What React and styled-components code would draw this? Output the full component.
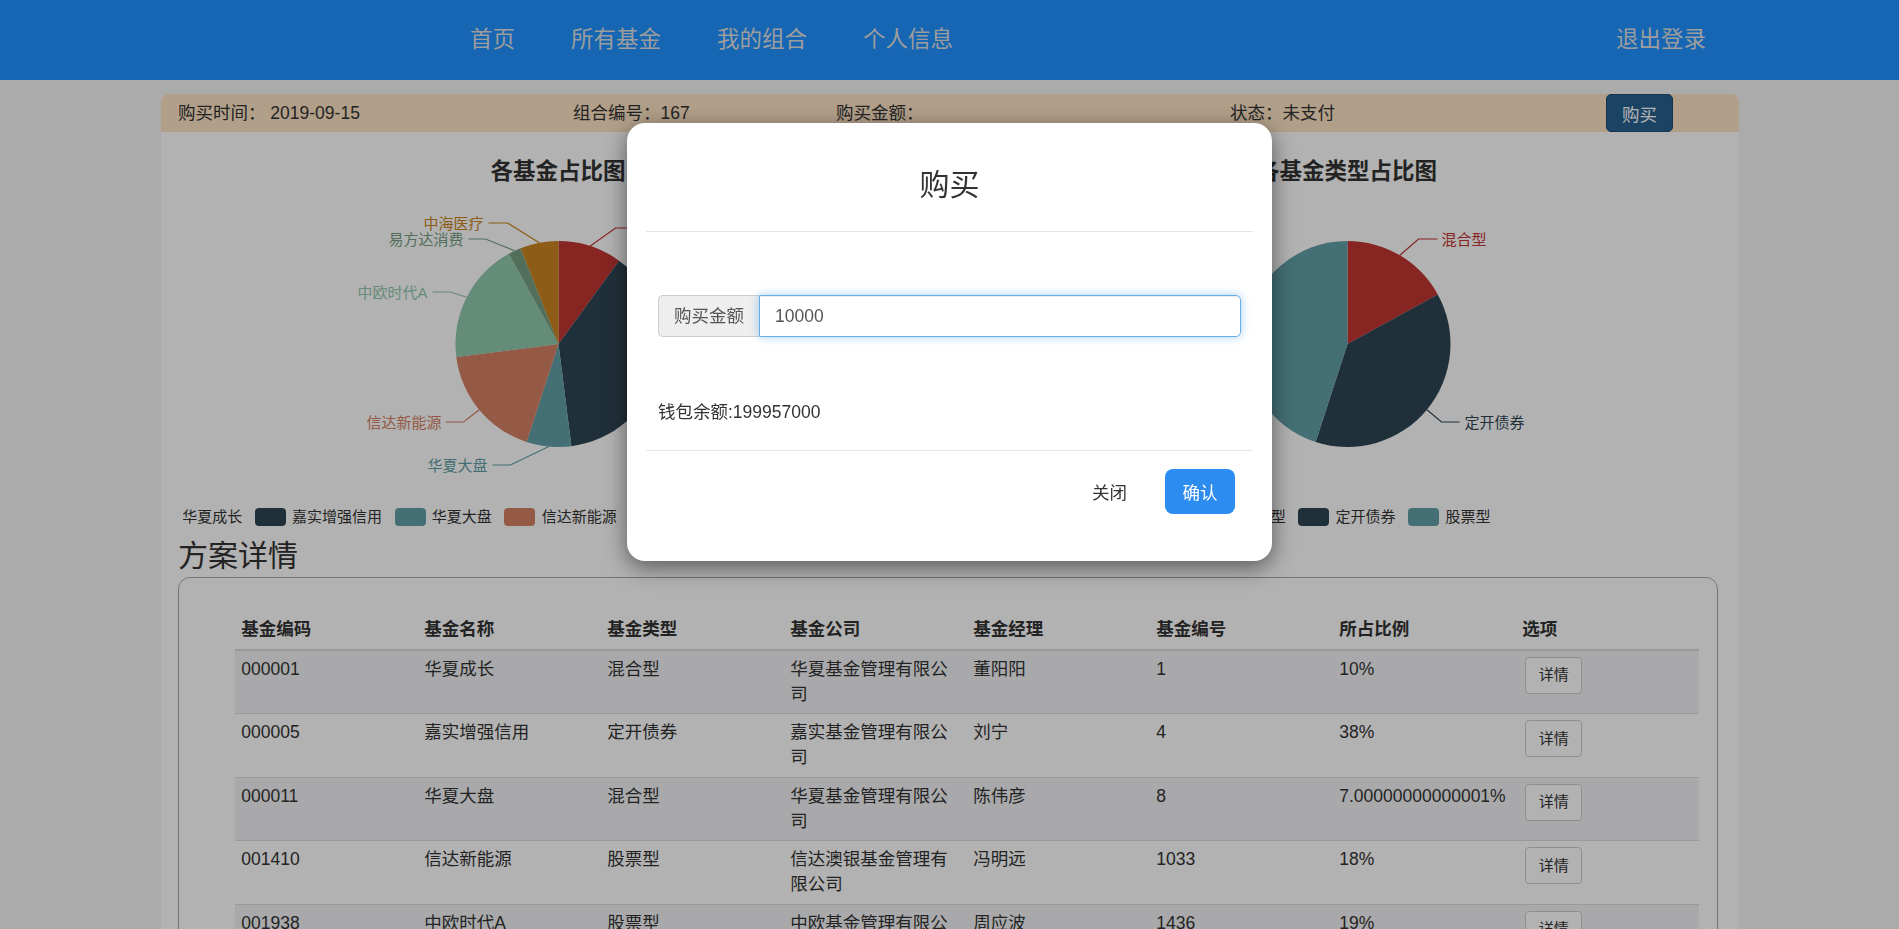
import React, { useEffect, useRef } from 'react'
import styled, { createGlobalStyle } from 'styled-components'

const GlobalStyle = createGlobalStyle`
  * { box-sizing: border-box; }
  html, body {
    margin: 0;
    padding: 0;
    overflow: hidden;
  }
  body {
    background: #f5f5f5;
    font-family: "Liberation Sans", "Noto Sans CJK SC", sans-serif;
    font-size: 17.5px;
    line-height: 25px;
    color: #333;
  }
`;

// data
const fundShare = [
  { name: '华夏成长', value: 10, color: '#c23531', line: [[31.8, -98], [57, -116], [76, -116]], text: [81, -116], anchor: 'start' },
  { name: '嘉实增强信用', value: 38, color: '#2f4554', line: [[99.8, 25.6], [118, 30], [137, 30]], text: [142, 30], anchor: 'start' },
  { name: '华夏大盘', value: 7, color: '#61a0a8', line: [[-9.7, 102.5], [-48, 121], [-66, 121]], text: [-71, 121], anchor: 'end' },
  { name: '信达新能源', value: 18, color: '#d48265', line: [[-79.3, 65.7], [-95, 78], [-113, 78]], text: [-117, 78], anchor: 'end' },
  { name: '中欧时代A', value: 19, color: '#91c7ae', line: [[-91.8, -46.8], [-108, -52], [-126, -52]], text: [-131, -52], anchor: 'end' },
  { name: '易方达消费', value: 2, color: '#749f83', line: [[-43.9, -93.2], [-73, -105], [-90, -105]], text: [-95, -105], anchor: 'end' },
  { name: '中海医疗', value: 6, color: '#ca8622', line: [[-19.3, -101.2], [-51, -121], [-70, -121]], text: [-75, -121], anchor: 'end' },
];

const typeShare = [
  { name: '混合型', value: 17, color: '#c23531', line: [[52.4, -88.7], [71, -105], [90, -105]], text: [94, -105], anchor: 'start' },
  { name: '定开债券', value: 38, color: '#2f4554', line: [[79.4, 65.7], [94, 78], [112, 78]], text: [117, 78], anchor: 'start' },
  { name: '股票型', value: 45, color: '#61a0a8', line: [[-101.7, -16.1], [-120.5, -19], [-139, -19]], text: [-144, -19], anchor: 'end' },
];

const funds = [
  ['000001', '华夏成长', '混合型', '华夏基金管理有限公司', '董阳阳', '1', '10%'],
  ['000005', '嘉实增强信用', '定开债券', '嘉实基金管理有限公司', '刘宁', '4', '38%'],
  ['000011', '华夏大盘', '混合型', '华夏基金管理有限公司', '陈伟彦', '8', '7.00000000000001%'],
  ['001410', '信达新能源', '股票型', '信达澳银基金管理有限公司', '冯明远', '1033', '18%'],
  ['001938', '中欧时代A', '股票型', '中欧基金管理有限公司', '周应波', '1436', '19%'],
  ['110022', '易方达消费', '股票型', '易方达基金管理有限公司', '萧楠', '2170', '2%'],
  ['398031', '中海医疗', '股票型', '中海基金管理有限公司', '左飞', '2511', '6%'],
];

//css section
const Navbar = styled.nav`
  position: relative;
  z-index: 1070;
  height: 80px;
  background: #1766b3;
  display: flex;
  align-items: center;
  padding: 0 165px 0 442px;
`;

const NavLink = styled.a`
  padding: 0 28px;
  font-size: 22.5px;
  line-height: 30px;
  color: #9d9d9d;
  text-decoration: none;
  white-space: nowrap;
  ${p => p.$right && 'margin-left: auto;'}
`;

const Container = styled.div`
  width: 1578px;
  margin: 14px auto 0;
  background: #fff;
  border-radius: 8px 8px 0 0;
  padding-bottom: 40px;
`;

const InfoBar = styled.div`
  height: 38px;
  background: bisque;
  border-radius: 8px 8px 0 0;
  display: grid;
  grid-template-columns: 395px 263px 394px 376px 1fr;
  align-items: center;
  padding-left: 17.5px;
  white-space: nowrap;
`;

const BuyButton = styled.button`
  justify-self: start;
  height: 38px;
  padding: 0 15px;
  background: #286090;
  border: 1px solid #204d74;
  border-radius: 5px;
  color: #fff;
  font-family: inherit;
  font-size: 17.5px;
`;

const ChartsRow = styled.div`
  display: flex;
`;

const ChartCol = styled.div`
  width: 50%;
  padding: 25px 16px 0 22px;
`;

const ChartTitle = styled.div`
  text-align: center;
  font-size: 22.5px;
  line-height: 30px;
  font-weight: bold;
  color: #333;
`;

const Legend = styled.div`
  margin-top: 7px;
  height: 17.5px;
  display: flex;
  justify-content: center;
  gap: 12.5px;
  overflow: hidden;
`;

const LegendItem = styled.div`
  flex-shrink: 0;
  display: flex;
  align-items: center;
  gap: 6.25px;
  font-size: 15px;
  line-height: 17.5px;
  white-space: nowrap;
  color: #333;
`;

const Swatch = styled.span`
  width: 31px;
  height: 17.5px;
  border-radius: 4px;
  background: ${p => p.$color};
`;

const SectionTitle = styled.h3`
  margin: 13px 0 0 17.5px;
  font-size: 30px;
  line-height: 33px;
  font-weight: 400;
`;

const Panel = styled.div`
  margin: 5.5px 0 0 17.5px;
  width: 1540px;
  border: 1px solid #aaa;
  border-radius: 12px;
  padding: 33px 18px 20px 56px;
`;

const Table = styled.table`
  width: 100%;
  table-layout: fixed;
  border-collapse: collapse;

  th {
    padding: 6.25px;
    text-align: left;
    vertical-align: bottom;
    border-bottom: 2.5px solid #ddd;
    font-weight: bold;
    line-height: 25px;
  }
  td {
    padding: 6.25px;
    vertical-align: top;
    border-top: 1px solid #ddd;
    line-height: 25px;
    white-space: normal;
  }
  tbody tr:nth-of-type(odd) {
    background: #f2f3f5;
  }
`;

const DetailButton = styled.button`
  margin-left: 3px;
  padding: 6.25px 12.5px;
  font-family: inherit;
  font-size: 15px;
  line-height: 22.5px;
  border: 1px solid #ccc;
  border-radius: 3.75px;
  background: #fff;
  color: #333;
`;

const Backdrop = styled.div`
  position: fixed;
  inset: 0;
  background: rgba(0, 0, 0, 0.3);
  z-index: 1040;
`;

const Modal = styled.div`
  position: fixed;
  top: 123px;
  left: 50%;
  margin-left: -322.5px;
  width: 645px;
  padding: 0 19px;
  background: #fff;
  border-radius: 18px;
  box-shadow: 0 6px 22px rgba(0, 0, 0, 0.5);
  z-index: 1050;
`;

const ModalHeader = styled.div`
  padding: 44.5px 0 30.5px;
  text-align: center;
  border-bottom: 1px solid #e5e5e5;

  h4 {
    margin: 0;
    font-size: 30px;
    line-height: 33px;
    font-weight: 400;
  }
`;

const ModalBody = styled.div`
  padding: 63px 12px 25px;
  p {
    margin: 62.5px 0 0;
  }
`;

const InputGroup = styled.div`
  display: flex;
  height: 42px;
`;

const Addon = styled.span`
  display: flex;
  align-items: center;
  padding: 0 15px;
  background: #eee;
  border: 1px solid #ccc;
  border-right: 0;
  border-radius: 5px 0 0 5px;
  color: #555;
  white-space: nowrap;
`;

const AmountInput = styled.input`
  flex: 1;
  min-width: 0;
  border: 1px solid #66afe9;
  border-radius: 0 5px 5px 0;
  padding: 0 15px;
  font-family: inherit;
  font-size: 17.5px;
  color: #555;
  outline: none;
  box-shadow: inset 0 1px 1px rgba(0, 0, 0, 0.075), 0 0 10px rgba(102, 175, 233, 0.6);
`;

const ModalFooter = styled.div`
  border-top: 1px solid #e5e5e5;
  padding: 18px 18px 47px 0;
  display: flex;
  justify-content: flex-end;
  align-items: center;
`;

const CloseButton = styled.button`
  padding: 0 17.5px;
  margin-right: 20.5px;
  background: none;
  border: none;
  font-family: inherit;
  font-size: 17.5px;
  color: #333;
`;

const ConfirmButton = styled.button`
  height: 45px;
  padding: 0 17.5px;
  background: #2d8cf0;
  border: none;
  border-radius: 8px;
  color: #fff;
  font-family: inherit;
  font-size: 17.5px;
`;

const CX = 375.5;
const CY = 157;
const R = 103;

const arcPath = (a0, a1) => {
  const rad = a => (a * Math.PI) / 180;
  const x0 = CX + R * Math.sin(rad(a0));
  const y0 = CY - R * Math.cos(rad(a0));
  const x1 = CX + R * Math.sin(rad(a1));
  const y1 = CY - R * Math.cos(rad(a1));
  const large = a1 - a0 > 180 ? 1 : 0;
  return `M${CX},${CY} L${x0},${y0} A${R},${R} 0 ${large} 1 ${x1},${y1} Z`;
};

const PieChart = ({ title, data }) => {
  let angle = 0;
  const slices = data.map(d => {
    const a0 = angle;
    angle += (d.value / 100) * 360;
    return { ...d, a0, a1: angle };
  });
  return (
    <ChartCol>
      <ChartTitle>{title}</ChartTitle>
      <svg width="751" height="314" viewBox="0 0 751 314" style={{ display: 'block' }}>
        {slices.map(s => (
          <path key={s.name} d={arcPath(s.a0, s.a1)} fill={s.color} />
        ))}
        {slices.map(s => (
          <g key={s.name + '-label'}>
            <polyline
              points={s.line.map(([x, y]) => `${CX + x},${CY + y}`).join(' ')}
              fill="none"
              stroke={s.color}
              strokeWidth="1.2"
            />
            <text
              x={CX + s.text[0]}
              y={CY + s.text[1]}
              fill={s.color}
              fontSize="15"
              textAnchor={s.anchor}
              dominantBaseline="central"
              fontFamily='"Liberation Sans", "Noto Sans CJK SC", sans-serif'
            >
              {s.name}
            </text>
          </g>
        ))}
      </svg>
      <Legend>
        {data.map(d => (
          <LegendItem key={d.name}>
            <Swatch $color={d.color} />
            {d.name}
          </LegendItem>
        ))}
      </Legend>
    </ChartCol>
  );
};

const App = () => {
  const inputRef = useRef(null);

  useEffect(() => {
    if (inputRef.current) {
      inputRef.current.focus();
      inputRef.current.setSelectionRange(5, 5);
    }
  }, []);

  return (
    <>
      <GlobalStyle />
      <Navbar>
        <NavLink href="#">首页</NavLink>
        <NavLink href="#">所有基金</NavLink>
        <NavLink href="#">我的组合</NavLink>
        <NavLink href="#">个人信息</NavLink>
        <NavLink href="#" $right>退出登录</NavLink>
      </Navbar>

      <Container>
        <InfoBar>
          <span>购买时间： 2019-09-15</span>
          <span>组合编号：167</span>
          <span>购买金额：</span>
          <span>状态：未支付</span>
          <BuyButton>购买</BuyButton>
        </InfoBar>

        <ChartsRow>
          <PieChart title="各基金占比图" data={fundShare} />
          <PieChart title="各基金类型占比图" data={typeShare} />
        </ChartsRow>

        <SectionTitle>方案详情</SectionTitle>
        <Panel>
          <Table>
            <thead>
              <tr>
                <th>基金编码</th>
                <th>基金名称</th>
                <th>基金类型</th>
                <th>基金公司</th>
                <th>基金经理</th>
                <th>基金编号</th>
                <th>所占比例</th>
                <th>选项</th>
              </tr>
            </thead>
            <tbody>
              {funds.map(row => (
                <tr key={row[0]}>
                  {row.map((cell, i) => (
                    <td key={i}>{cell}</td>
                  ))}
                  <td>
                    <DetailButton>详情</DetailButton>
                  </td>
                </tr>
              ))}
            </tbody>
          </Table>
        </Panel>
      </Container>

      <Backdrop />
      <Modal>
        <ModalHeader>
          <h4>购买</h4>
        </ModalHeader>
        <ModalBody>
          <InputGroup>
            <Addon>购买金额</Addon>
            <AmountInput ref={inputRef} type="text" defaultValue="10000" />
          </InputGroup>
          <p>钱包余额:199957000</p>
        </ModalBody>
        <ModalFooter>
          <CloseButton>关闭</CloseButton>
          <ConfirmButton>确认</ConfirmButton>
        </ModalFooter>
      </Modal>
    </>
  );
};

export default App;
